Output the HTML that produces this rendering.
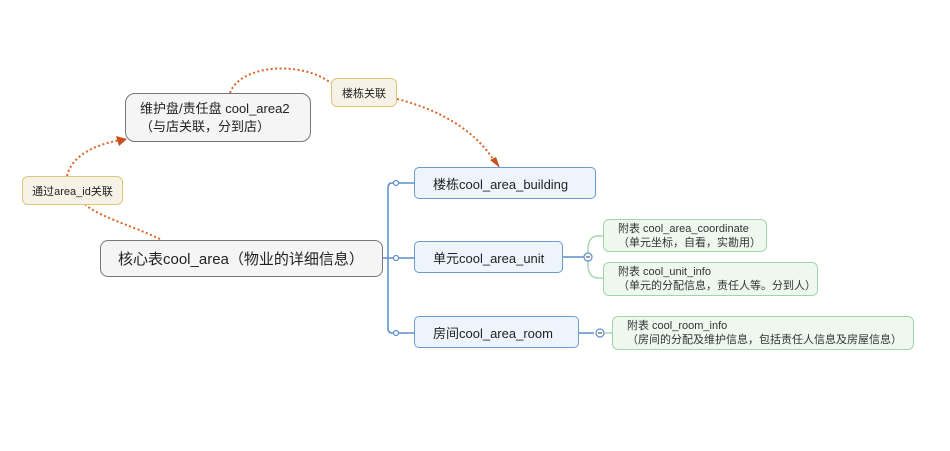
<!DOCTYPE html><html><head><meta charset="utf-8"><style>
body{margin:0;width:950px;height:451px;background:#fff;position:relative;overflow:hidden;font-family:"Liberation Sans","Noto Sans CJK SC",sans-serif;color:#222}
.b{position:absolute;box-sizing:border-box;display:flex;align-items:center}
.g{background:#f5f5f5;border:1.5px solid #777;border-radius:8px}
.y{background:#f6f3e6;border:1.5px solid #d9c77e;border-radius:6px;font-size:11px;justify-content:center}
.bl{background:#eef4fb;border:1.5px solid #6c9bd2;border-radius:5px;font-size:13px;padding-left:18px}
.gr{background:#eef8ef;border:1.5px solid #9fd6a8;border-radius:6px;font-size:11px;padding-left:14px;line-height:14px;color:#333}
</style></head><body>
<svg width="950" height="451" style="position:absolute;left:0;top:0">
<g fill="none" stroke="#d9662a" stroke-width="2" stroke-dasharray="2 2.5">
<path d="M160 239 C130 225,95 215,85 204"/>
<path d="M67 176 C72 155,95 145,120 140"/>
<path d="M230 93 C240 65,300 60,331 83"/>
<path d="M397 99 C440 110,475 130,495 162"/>
</g>
<path d="M116 136 L127 139 L119 146Z" fill="#c8501a"/>
<path d="M490 160 L500 168 L496 157Z" fill="#c8501a"/>
<g fill="none" stroke="#5b8fcc" stroke-width="1.5">
<path d="M383 258 H396"/>
<path d="M396 183 H392 Q388 183 388 188 V328 Q388 333 392 333 H396"/>
<path d="M396 183 H414 M396 258 H414 M396 333 H414"/>
<path d="M563 257 H584 M579 333 H594"/>
</g>
<g fill="#fff" stroke="#5b8fcc" stroke-width="1.2">
<circle cx="396" cy="183" r="2.5"/><circle cx="396" cy="258" r="2.5"/><circle cx="396" cy="333" r="2.5"/>
</g>
<g fill="none" stroke="#a8d8b0" stroke-width="1.5">
<path d="M603 236 H598 Q588 236 588 250 V264 Q588 278 598 278 H603"/>
<path d="M600 333 H612"/>
</g>
<g fill="#fff" stroke="#5b8fcc" stroke-width="1.2">
<circle cx="588" cy="257" r="4"/><circle cx="600" cy="333" r="4"/>
</g>
<path d="M586 257 H590 M598 333 H602" stroke="#333" stroke-width="1"/>
</svg>
<div class="b g" style="left:100px;top:240px;width:283px;height:37px;font-size:15px;padding-left:17px">核心表cool_area（物业的详细信息）</div>
<div class="b g" style="left:125px;top:93px;width:186px;height:49px;font-size:13px;padding-left:14px;line-height:18px;border-radius:10px">维护盘/责任盘 cool_area2<br>（与店关联，分到店）</div>
<div class="b y" style="left:22px;top:176px;width:101px;height:29px">通过area_id关联</div>
<div class="b y" style="left:331px;top:78px;width:66px;height:29px">楼栋关联</div>
<div class="b bl" style="left:414px;top:167px;width:182px;height:32px">楼栋cool_area_building</div>
<div class="b bl" style="left:414px;top:241px;width:149px;height:32px">单元cool_area_unit</div>
<div class="b bl" style="left:414px;top:316px;width:165px;height:32px">房间cool_area_room</div>
<div class="b gr" style="left:603px;top:219px;width:164px;height:33px">附表 cool_area_coordinate<br>（单元坐标，自看，实勘用）</div>
<div class="b gr" style="left:603px;top:262px;width:215px;height:34px">附表 cool_unit_info<br>（单元的分配信息，责任人等。分到人）</div>
<div class="b gr" style="left:612px;top:316px;width:302px;height:34px">附表 cool_room_info<br>（房间的分配及维护信息，包括责任人信息及房屋信息）</div>
</body></html>
